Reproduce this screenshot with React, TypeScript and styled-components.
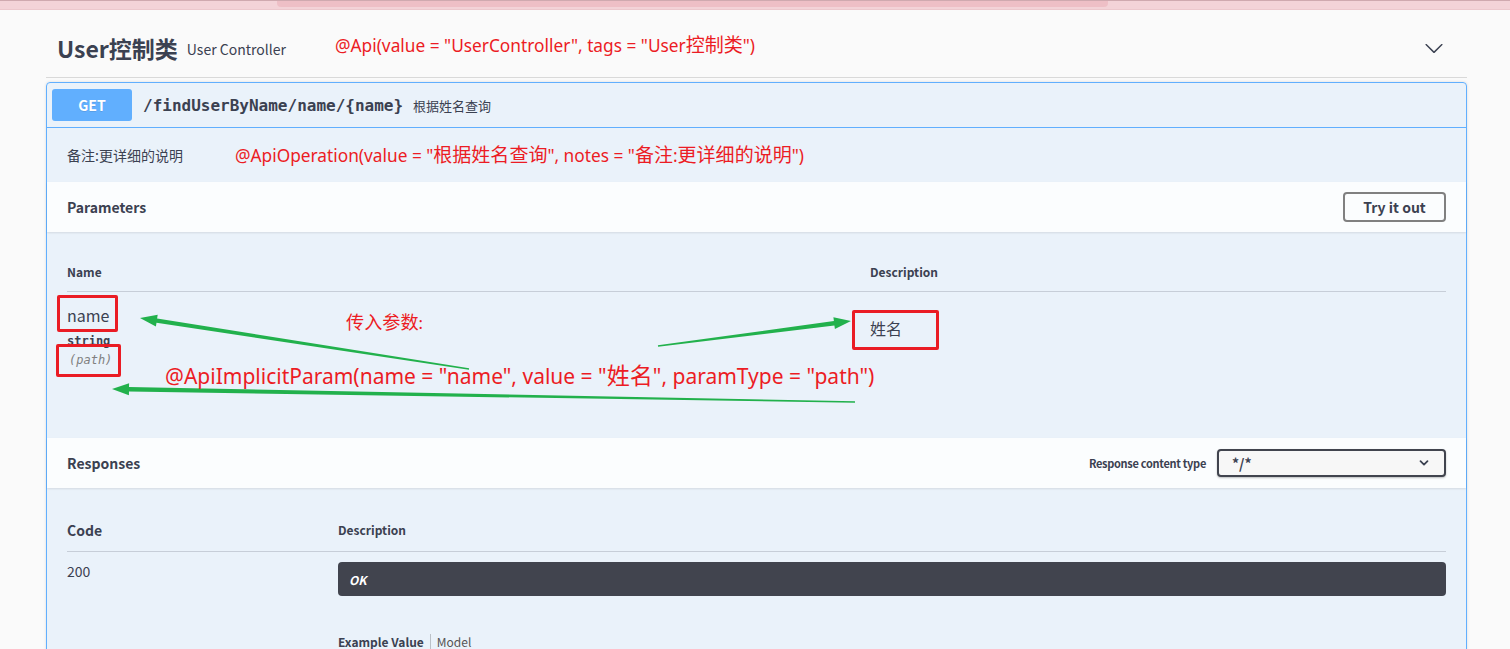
import React from "react";
import styled, { createGlobalStyle } from "styled-components";

const UI_FONT = `"Noto Sans CJK SC", "Noto Sans", sans-serif`;
const MONO = `"DejaVu Sans Mono", "Liberation Mono", monospace`;
const NOTE_FONT = `"Noto Sans", "Noto Sans CJK SC", sans-serif`;

const GlobalStyle = createGlobalStyle`
  html, body {
    margin: 0;
    padding: 0;
    overflow: hidden;
    background: #fafafa;
  }
  * {
    box-sizing: border-box;
  }
`;

type Pt = [number, number];

// tapered arrow like the screenshot tool draws
const arrowPoints = (
  from: Pt,
  to: Pt,
  tailW = 1.5,
  shaftW = 4.5,
  headL = 17,
  headW = 12
) => {
  const dx = to[0] - from[0];
  const dy = to[1] - from[1];
  const len = Math.hypot(dx, dy);
  const ux = dx / len;
  const uy = dy / len;
  const nx = -uy;
  const ny = ux;
  const bx = to[0] - ux * headL;
  const by = to[1] - uy * headL;
  const pts: Pt[] = [
    [from[0] + (nx * tailW) / 2, from[1] + (ny * tailW) / 2],
    [bx + (nx * shaftW) / 2, by + (ny * shaftW) / 2],
    [bx + (nx * headW) / 2, by + (ny * headW) / 2],
    [to[0], to[1]],
    [bx - (nx * headW) / 2, by - (ny * headW) / 2],
    [bx - (nx * shaftW) / 2, by - (ny * shaftW) / 2],
    [from[0] - (nx * tailW) / 2, from[1] - (ny * tailW) / 2],
  ];
  return pts.map((p) => `${p[0].toFixed(1)},${p[1].toFixed(1)}`).join(" ");
};

const arrows: { from: Pt; to: Pt }[] = [
  { from: [469, 369], to: [140, 318] },
  { from: [658, 346], to: [851, 321] },
  { from: [855, 402], to: [112, 389] },
];

const App: React.FC = () => {
  return (
    <Page>
      <GlobalStyle />
      <TopStrip>
        <TopTab />
      </TopStrip>

      <Wrapper>
        <TagHeader>
          <TagTitle>User控制类</TagTitle>
          <TagDesc>User Controller</TagDesc>
          <ExpandIcon viewBox="0 0 20 20" width="20" height="20">
            <path d="M17.418 6.109c.272-.268.709-.268.979 0s.271.701 0 .969l-7.908 7.83c-.27.268-.707.268-.979 0l-7.908-7.83c-.27-.268-.27-.701 0-.969.271-.268.709-.268.979 0L10 13.25l7.418-7.141z" />
          </ExpandIcon>
        </TagHeader>

        <Opblock>
          <Summary>
            <Method>GET</Method>
            <PathText>/findUserByName/name/{"{name}"}</PathText>
            <SummaryDesc>根据姓名查询</SummaryDesc>
          </Summary>

          <Notes>备注:更详细的说明</Notes>

          <SectionHeader>
            <SectionTitle>Parameters</SectionTitle>
            <TryButton>Try it out</TryButton>
          </SectionHeader>

          <TableContainer>
            <ParamGrid>
              <HeadCell>Name</HeadCell>
              <HeadCell>Description</HeadCell>
            </ParamGrid>
            <ParamRow>
              <NameCell>
                <ParamName>name</ParamName>
                <ParamType>string</ParamType>
                <ParamIn>(path)</ParamIn>
              </NameCell>
              <DescCell>姓名</DescCell>
            </ParamRow>
          </TableContainer>

          <SectionHeader>
            <SectionTitle>Responses</SectionTitle>
            <ContentTypeLabel>Response content type</ContentTypeLabel>
            <SelectBox>
              <span>*/*</span>
              <svg viewBox="0 0 12 12" width="12" height="12">
                <path
                  d="M2.5 4.2 L6 7.6 L9.5 4.2"
                  fill="none"
                  stroke="#3b4151"
                  strokeWidth="1.8"
                  strokeLinecap="round"
                  strokeLinejoin="round"
                />
              </svg>
            </SelectBox>
          </SectionHeader>

          <ResponsesWrapper>
            <RespGrid>
              <CodeHead>Code</CodeHead>
              <HeadCell>Description</HeadCell>
            </RespGrid>
            <RespRow>
              <StatusCode>200</StatusCode>
              <div>
                <MessageBar>OK</MessageBar>
                <ModelTabs>
                  <TabItem $active>Example Value</TabItem>
                  <TabItem>Model</TabItem>
                </ModelTabs>
                <CodeBlock>{`"string"`}</CodeBlock>
              </div>
            </RespRow>
          </ResponsesWrapper>
        </Opblock>
      </Wrapper>

      <Overlay>
        <ArrowLayer viewBox="0 0 1510 649" width="1510" height="649">
          {arrows.map((a, i) => (
            <polygon key={i} points={arrowPoints(a.from, a.to)} fill="#22b14c" />
          ))}
        </ArrowLayer>
        <RedBox $x={57} $y={295} $w={61} $h={37} />
        <RedBox $x={56} $y={344} $w={65} $h={33} />
        <RedBox $x={852} $y={310} $w={87} $h={40} />
        <NoteText $x={335} $y={37} $size={17.3}>
          @Api(value = "UserController", tags = "User<Han>控制类</Han>")
        </NoteText>
        <NoteText $x={235} $y={147} $size={17.3}>
          @ApiOperation(value = "<Han>根据姓名查询</Han>", notes = "<Han>备注</Han>:
          <Han>更详细的说明</Han>")
        </NoteText>
        <NoteText $x={346} $y={315} $size={16.5}>
          <Han>传入参数</Han>:
        </NoteText>
        <NoteText $x={165} $y={366} $size={21}>
          @ApiImplicitParam(name = "name", value = "<Han>姓名</Han>", paramType = "path")
        </NoteText>
      </Overlay>
    </Page>
  );
};

export default App;

const Page = styled.div`
  position: relative;
  width: 1510px;
  height: 649px;
  overflow: hidden;
  background: #fafafa;
  font-family: ${UI_FONT};
  color: #3b4151;
`;

const TopStrip = styled.div`
  height: 10px;
  background: #f3d3d8;
  border-top: 1px solid #cfa9af;
  border-bottom: 1px solid #ecc8cd;
`;

const TopTab = styled.div`
  margin-left: 277px;
  width: 831px;
  height: 6px;
  background: #eebfc6;
  border-radius: 0 0 4px 4px;
`;

const Wrapper = styled.div`
  margin-left: 46px;
  width: 1421px;
`;

const TagHeader = styled.div`
  display: flex;
  align-items: center;
  height: 68px;
  padding: 8px 23px 0 11px;
  border-bottom: 1px solid #d9d9d9;
`;

const TagTitle = styled.span`
  font-size: 23px;
  font-weight: 700;
  line-height: 30px;
`;

const TagDesc = styled.span`
  margin-left: 9px;
  font-size: 14px;
  line-height: 20px;
  padding-top: 2px;
`;

const ExpandIcon = styled.svg`
  margin-left: auto;
  fill: #3b4151;
`;

const Opblock = styled.div`
  margin-top: 4px;
  border: 1px solid #61affe;
  border-radius: 4px;
  background: rgba(97, 175, 254, 0.1);
  box-shadow: 0 0 3px rgba(0, 0, 0, 0.12);
`;

const Summary = styled.div`
  display: flex;
  align-items: center;
  height: 45px;
  padding: 0 5px;
  border-bottom: 1px solid #61affe;
`;

const Method = styled.div`
  display: flex;
  align-items: center;
  justify-content: center;
  width: 80px;
  height: 32px;
  border-radius: 3px;
  background: #61affe;
  color: #fff;
  font-size: 14px;
  font-weight: 700;
  text-shadow: 0 1px 0 rgba(0, 0, 0, 0.1);
`;

const PathText = styled.span`
  margin-left: 11px;
  font-family: ${MONO};
  font-size: 16px;
  font-weight: 600;
  color: #3b4151;
`;

const SummaryDesc = styled.span`
  margin-left: 10px;
  font-size: 13px;
  color: #3b4151;
`;

const Notes = styled.div`
  height: 54px;
  padding: 15px 20px;
  font-size: 14px;
  line-height: 24px;
`;

const SectionHeader = styled.div`
  display: flex;
  align-items: center;
  height: 50px;
  padding: 0 20px;
  background: rgba(255, 255, 255, 0.8);
  box-shadow: 0 1px 2px rgba(0, 0, 0, 0.1);
`;

const SectionTitle = styled.h4`
  flex: 1;
  margin: 0;
  font-size: 14px;
  font-weight: 700;
`;

const TryButton = styled.button`
  width: 103px;
  height: 30px;
  padding: 0;
  border: 2px solid #808080;
  border-radius: 4px;
  background: transparent;
  font-family: ${UI_FONT};
  font-size: 14px;
  font-weight: 700;
  color: #3b4151;
`;

const TableContainer = styled.div`
  padding: 20px;
`;

const ParamGrid = styled.div`
  display: grid;
  grid-template-columns: 803px 1fr;
  border-bottom: 1px solid rgba(59, 65, 81, 0.2);
`;

const HeadCell = styled.div`
  padding: 12px 0;
  font-size: 12px;
  font-weight: 700;
  line-height: 15px;
`;

const ParamRow = styled.div`
  display: grid;
  grid-template-columns: 803px 1fr;
  height: 126px;
`;

const NameCell = styled.div`
  padding-top: 10px;
`;

const ParamName = styled.div`
  font-size: 16px;
  line-height: 26px;
`;

const ParamType = styled.div`
  padding: 6px 0 5px;
  font-family: ${MONO};
  font-size: 12px;
  font-weight: 700;
  line-height: 14px;
`;

const ParamIn = styled.div`
  padding-left: 2px;
  font-family: ${MONO};
  font-size: 12px;
  font-style: italic;
  line-height: 14px;
  color: gray;
`;

const DescCell = styled.div`
  padding-top: 26px;
  font-size: 16px;
  line-height: 20px;
`;

const ContentTypeLabel = styled.span`
  margin-right: 11px;
  font-size: 11px;
  font-weight: 700;
  letter-spacing: -0.3px;
`;

const SelectBox = styled.div`
  display: flex;
  align-items: center;
  justify-content: space-between;
  width: 229px;
  height: 28px;
  padding: 0 14px 0 13px;
  border: 2px solid #41444e;
  border-radius: 4px;
  background: #f7f7f7;
  box-shadow: 0 1px 2px rgba(0, 0, 0, 0.25);
  font-size: 14px;
  font-weight: 700;
`;

const ResponsesWrapper = styled.div`
  padding: 20px;
`;

const RespGrid = styled.div`
  display: grid;
  grid-template-columns: 271px 1fr;
  align-items: center;
  border-bottom: 1px solid rgba(59, 65, 81, 0.2);
`;

const CodeHead = styled.div`
  padding: 13px 0 12px;
  font-size: 14px;
  font-weight: 700;
  line-height: 18px;
`;

const RespRow = styled.div`
  display: grid;
  grid-template-columns: 271px 1fr;
  padding-top: 10px;
`;

const StatusCode = styled.div`
  font-size: 14px;
  line-height: 18px;
`;

const MessageBar = styled.div`
  display: flex;
  align-items: center;
  height: 34px;
  padding: 0 11px;
  border-radius: 4px;
  background: #41444e;
  color: #fff;
  font-size: 12px;
  font-weight: 700;
  font-style: italic;
`;

const ModelTabs = styled.div`
  display: flex;
  margin-top: 38px;
  line-height: 16px;
`;

const TabItem = styled.span<{ $active?: boolean }>`
  padding: 0 6px;
  font-size: 12px;
  font-weight: ${(p) => (p.$active ? 700 : 400)};
  color: ${(p) => (p.$active ? "#3b4151" : "#555")};

  &:first-child {
    padding-left: 0;
    border-right: 1px solid rgba(0, 0, 0, 0.2);
  }
`;

const CodeBlock = styled.pre`
  margin: 10px 0 0;
  padding: 10px;
  border-radius: 4px;
  background: #333;
  color: #fff;
  font-family: ${MONO};
  font-size: 12px;
`;

const Overlay = styled.div`
  position: absolute;
  top: 0;
  left: 0;
  width: 1510px;
  height: 649px;
  pointer-events: none;
`;

const ArrowLayer = styled.svg`
  position: absolute;
  top: 0;
  left: 0;
`;

const RedBox = styled.div<{ $x: number; $y: number; $w: number; $h: number }>`
  position: absolute;
  left: ${(p) => p.$x}px;
  top: ${(p) => p.$y}px;
  width: ${(p) => p.$w}px;
  height: ${(p) => p.$h}px;
  border: 3px solid #ea1c24;
  border-radius: 2px;
`;

const NoteText = styled.div<{ $x: number; $y: number; $size: number }>`
  position: absolute;
  left: ${(p) => p.$x}px;
  top: ${(p) => p.$y}px;
  font-family: ${NOTE_FONT};
  font-size: ${(p) => p.$size}px;
  line-height: 1;
  color: #ec1c24;
  white-space: nowrap;
`;

// the annotation font draws Chinese a little wider than its Latin letters
const Han = styled.span`
  font-family: "Noto Sans CJK SC", sans-serif;
  font-size: 1.1em;
  line-height: 0;
`;
